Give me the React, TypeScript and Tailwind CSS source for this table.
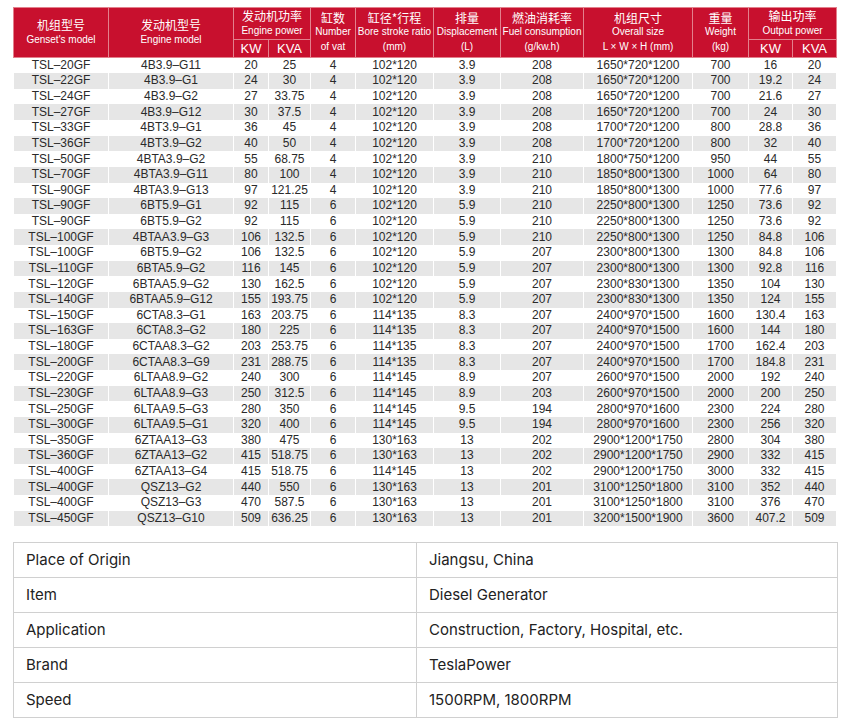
import React from "react";

const rows: string[][] = [
  ["TSL–20GF", "4B3.9–G11", "20", "25", "4", "102*120", "3.9", "208", "1650*720*1200", "700", "16", "20"],
  ["TSL–22GF", "4B3.9–G1", "24", "30", "4", "102*120", "3.9", "208", "1650*720*1200", "700", "19.2", "24"],
  ["TSL–24GF", "4B3.9–G2", "27", "33.75", "4", "102*120", "3.9", "208", "1650*720*1200", "700", "21.6", "27"],
  ["TSL–27GF", "4B3.9–G12", "30", "37.5", "4", "102*120", "3.9", "208", "1650*720*1200", "700", "24", "30"],
  ["TSL–33GF", "4BT3.9–G1", "36", "45", "4", "102*120", "3.9", "208", "1700*720*1200", "800", "28.8", "36"],
  ["TSL–36GF", "4BT3.9–G2", "40", "50", "4", "102*120", "3.9", "208", "1700*720*1200", "800", "32", "40"],
  ["TSL–50GF", "4BTA3.9–G2", "55", "68.75", "4", "102*120", "3.9", "210", "1800*750*1200", "950", "44", "55"],
  ["TSL–70GF", "4BTA3.9–G11", "80", "100", "4", "102*120", "3.9", "210", "1850*800*1300", "1000", "64", "80"],
  ["TSL–90GF", "4BTA3.9–G13", "97", "121.25", "4", "102*120", "3.9", "210", "1850*800*1300", "1000", "77.6", "97"],
  ["TSL–90GF", "6BT5.9–G1", "92", "115", "6", "102*120", "5.9", "210", "2250*800*1300", "1250", "73.6", "92"],
  ["TSL–90GF", "6BT5.9–G2", "92", "115", "6", "102*120", "5.9", "210", "2250*800*1300", "1250", "73.6", "92"],
  ["TSL–100GF", "4BTAA3.9–G3", "106", "132.5", "6", "102*120", "5.9", "210", "2250*800*1300", "1250", "84.8", "106"],
  ["TSL–100GF", "6BT5.9–G2", "106", "132.5", "6", "102*120", "5.9", "207", "2300*800*1300", "1300", "84.8", "106"],
  ["TSL–110GF", "6BTA5.9–G2", "116", "145", "6", "102*120", "5.9", "207", "2300*800*1300", "1300", "92.8", "116"],
  ["TSL–120GF", "6BTAA5.9–G2", "130", "162.5", "6", "102*120", "5.9", "207", "2300*830*1300", "1350", "104", "130"],
  ["TSL–140GF", "6BTAA5.9–G12", "155", "193.75", "6", "102*120", "5.9", "207", "2300*830*1300", "1350", "124", "155"],
  ["TSL–150GF", "6CTA8.3–G1", "163", "203.75", "6", "114*135", "8.3", "207", "2400*970*1500", "1600", "130.4", "163"],
  ["TSL–163GF", "6CTA8.3–G2", "180", "225", "6", "114*135", "8.3", "207", "2400*970*1500", "1600", "144", "180"],
  ["TSL–180GF", "6CTAA8.3–G2", "203", "253.75", "6", "114*135", "8.3", "207", "2400*970*1500", "1700", "162.4", "203"],
  ["TSL–200GF", "6CTAA8.3–G9", "231", "288.75", "6", "114*135", "8.3", "207", "2400*970*1500", "1700", "184.8", "231"],
  ["TSL–220GF", "6LTAA8.9–G2", "240", "300", "6", "114*145", "8.9", "207", "2600*970*1500", "2000", "192", "240"],
  ["TSL–230GF", "6LTAA8.9–G3", "250", "312.5", "6", "114*145", "8.9", "203", "2600*970*1500", "2000", "200", "250"],
  ["TSL–250GF", "6LTAA9.5–G3", "280", "350", "6", "114*145", "9.5", "194", "2800*970*1600", "2300", "224", "280"],
  ["TSL–300GF", "6LTAA9.5–G1", "320", "400", "6", "114*145", "9.5", "194", "2800*970*1600", "2300", "256", "320"],
  ["TSL–350GF", "6ZTAA13–G3", "380", "475", "6", "130*163", "13", "202", "2900*1200*1750", "2800", "304", "380"],
  ["TSL–360GF", "6ZTAA13–G2", "415", "518.75", "6", "130*163", "13", "202", "2900*1200*1750", "2900", "332", "415"],
  ["TSL–400GF", "6ZTAA13–G4", "415", "518.75", "6", "114*145", "13", "202", "2900*1200*1750", "3000", "332", "415"],
  ["TSL–400GF", "QSZ13–G2", "440", "550", "6", "130*163", "13", "201", "3100*1250*1800", "3100", "352", "440"],
  ["TSL–400GF", "QSZ13–G3", "470", "587.5", "6", "130*163", "13", "201", "3100*1250*1800", "3100", "376", "470"],
  ["TSL–450GF", "QSZ13–G10", "509", "636.25", "6", "130*163", "13", "201", "3200*1500*1900", "3600", "407.2", "509"],
];

const widths = [95, 125, 35, 42, 45, 78, 67, 83, 109, 56, 44, 44];

const specs: [string, string][] = [
  ["Place of Origin", "Jiangsu, China"],
  ["Item", "Diesel Generator"],
  ["Application", "Construction, Factory, Hospital, etc."],
  ["Brand", "TeslaPower"],
  ["Speed", "1500RPM, 1800RPM"],
];

const cn = "font-['Noto_Sans_CJK_SC',sans-serif] text-[12px] leading-[14.5px]";
const en = "font-['Liberation_Sans',Arial,sans-serif] text-[10px] leading-[14.5px]";
const th = "border border-[#e3808c] bg-[#c8102e] text-white text-center align-middle p-0 font-normal";
const thSub = th + " font-['Liberation_Sans',Arial,sans-serif] text-[13px] leading-[15px]";

function H({ zh, lines }: { zh: string; lines: string[] }) {
  return (
    <>
      <div className={cn}>{zh}</div>
      {lines.map((l, i) => (
        <div key={i} className={en + " whitespace-nowrap"}>
          {l}
        </div>
      ))}
    </>
  );
}

export default function App() {
  return (
    <div className="w-[851px] min-h-[723px] bg-white pt-[7px] pl-[13px]">
      <table className="table-fixed border-collapse w-[823px]">
        <colgroup>
          {widths.map((w, i) => (
            <col key={i} style={{ width: w }} />
          ))}
        </colgroup>
        <thead>
          <tr className="h-[32px]">
            <th rowSpan={2} className={th}>
              <H zh="机组型号" lines={["Genset's model"]} />
            </th>
            <th rowSpan={2} className={th}>
              <H zh="发动机型号" lines={["Engine model"]} />
            </th>
            <th colSpan={2} className={th}>
              <H zh="发动机功率" lines={["Engine power"]} />
            </th>
            <th rowSpan={2} className={th}>
              <H zh="缸数" lines={["Number", "of vat"]} />
            </th>
            <th rowSpan={2} className={th}>
              <H zh="缸径*行程" lines={["Bore stroke ratio", "(mm)"]} />
            </th>
            <th rowSpan={2} className={th}>
              <H zh="排量" lines={["Displacement", "(L)"]} />
            </th>
            <th rowSpan={2} className={th}>
              <H zh="燃油消耗率" lines={["Fuel consumption", "(g/kw.h)"]} />
            </th>
            <th rowSpan={2} className={th}>
              <H zh="机组尺寸" lines={["Overall size", "L × W × H (mm)"]} />
            </th>
            <th rowSpan={2} className={th}>
              <H zh="重量" lines={["Weight", "(kg)"]} />
            </th>
            <th colSpan={2} className={th}>
              <H zh="输出功率" lines={["Output power"]} />
            </th>
          </tr>
          <tr className="h-[18px]">
            <th className={thSub}>KW</th>
            <th className={thSub}>KVA</th>
            <th className={thSub}>KW</th>
            <th className={thSub}>KVA</th>
          </tr>
        </thead>
        <tbody>
          {rows.map((r, i) => (
            <tr key={i} className={(i % 2 === 1 ? "bg-[#e6e6e6]" : "bg-white") + " h-[15.63px]"}>
              {r.map((c, j) => (
                <td
                  key={j}
                  className="border-x border-white p-0 text-center align-middle whitespace-nowrap font-['Liberation_Sans',Arial,sans-serif] text-[12px] leading-[15px] text-[#2a2a2a]"
                >
                  {c}
                </td>
              ))}
            </tr>
          ))}
        </tbody>
      </table>

      <table className="table-fixed border-collapse w-[824px] mt-[16px]">
        <colgroup>
          <col style={{ width: 403 }} />
          <col style={{ width: 421 }} />
        </colgroup>
        <tbody>
          {specs.map(([k, v], i) => (
            <tr key={i} className="h-[35px]">
              <td className="border border-[#d0d0d0] px-[12px] py-0 align-middle font-['Inter',sans-serif] text-[15px] text-[#222]">
                {k}
              </td>
              <td className="border border-[#d0d0d0] px-[12px] py-0 align-middle font-['Inter',sans-serif] text-[15px] text-[#222]">
                {v}
              </td>
            </tr>
          ))}
        </tbody>
      </table>
    </div>
  );
}
